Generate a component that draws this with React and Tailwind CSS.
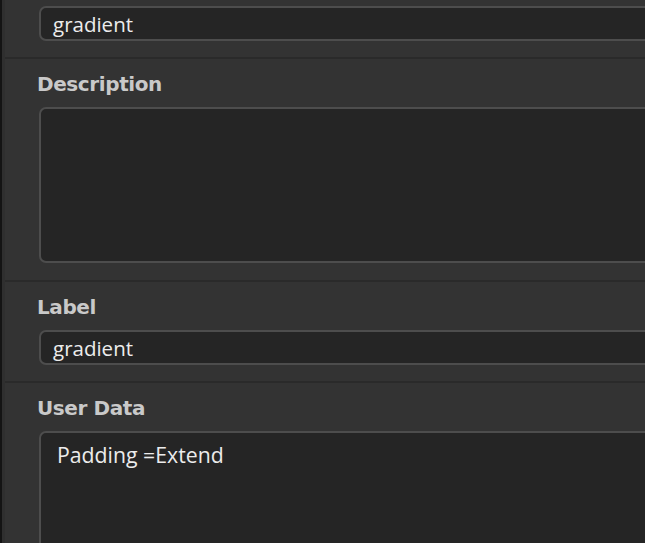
export default function App() {
  const label = "text-[20px] leading-[24px] font-bold text-[#c9c9c9] font-['DejaVu_Sans',sans-serif] tracking-[-0.4px]";
  const field = "w-[640px] border-2 border-[#4d4d4d] bg-[#252525] rounded-[7px] text-[#ececec] font-['Open_Sans',sans-serif]";
  return (
    <div className="w-[645px] h-[543px] overflow-hidden bg-[#333333] flex">
      <div className="w-[2px] shrink-0 bg-[#141414]" />
      <div className="w-[3px] shrink-0 bg-[#2f2f2f]" />
      <div className="flex-1 flex flex-col">
        <section className="pl-[34px] pt-[6px] pb-[16px] border-b-2 border-[#2a2a2a]">
          <div className={`${field} h-[35px] flex items-center pl-[12px] pt-[2px] text-[20.5px]`}>gradient</div>
        </section>
        <section className="pl-[32px] pt-[13px] pb-[17px] border-b-2 border-[#2a2a2a]">
          <div className={label}>Description</div>
          <div className={`${field} ml-[2px] mt-[11px] h-[156px]`} />
        </section>
        <section className="pl-[32px] pt-[13px] pb-[16px] border-b-2 border-[#2a2a2a]">
          <div className={label}>Label</div>
          <div className={`${field} ml-[2px] mt-[11px] h-[35px] flex items-center pl-[12px] pt-[2px] text-[20.5px]`}>gradient</div>
        </section>
        <section className="pl-[32px] pt-[13px]">
          <div className={label}>User Data</div>
          <div className={`${field} ml-[2px] mt-[11px] h-[156px] pl-[16px] pt-[6px] text-[21.25px]`}>Padding =Extend</div>
        </section>
      </div>
    </div>
  );
}
